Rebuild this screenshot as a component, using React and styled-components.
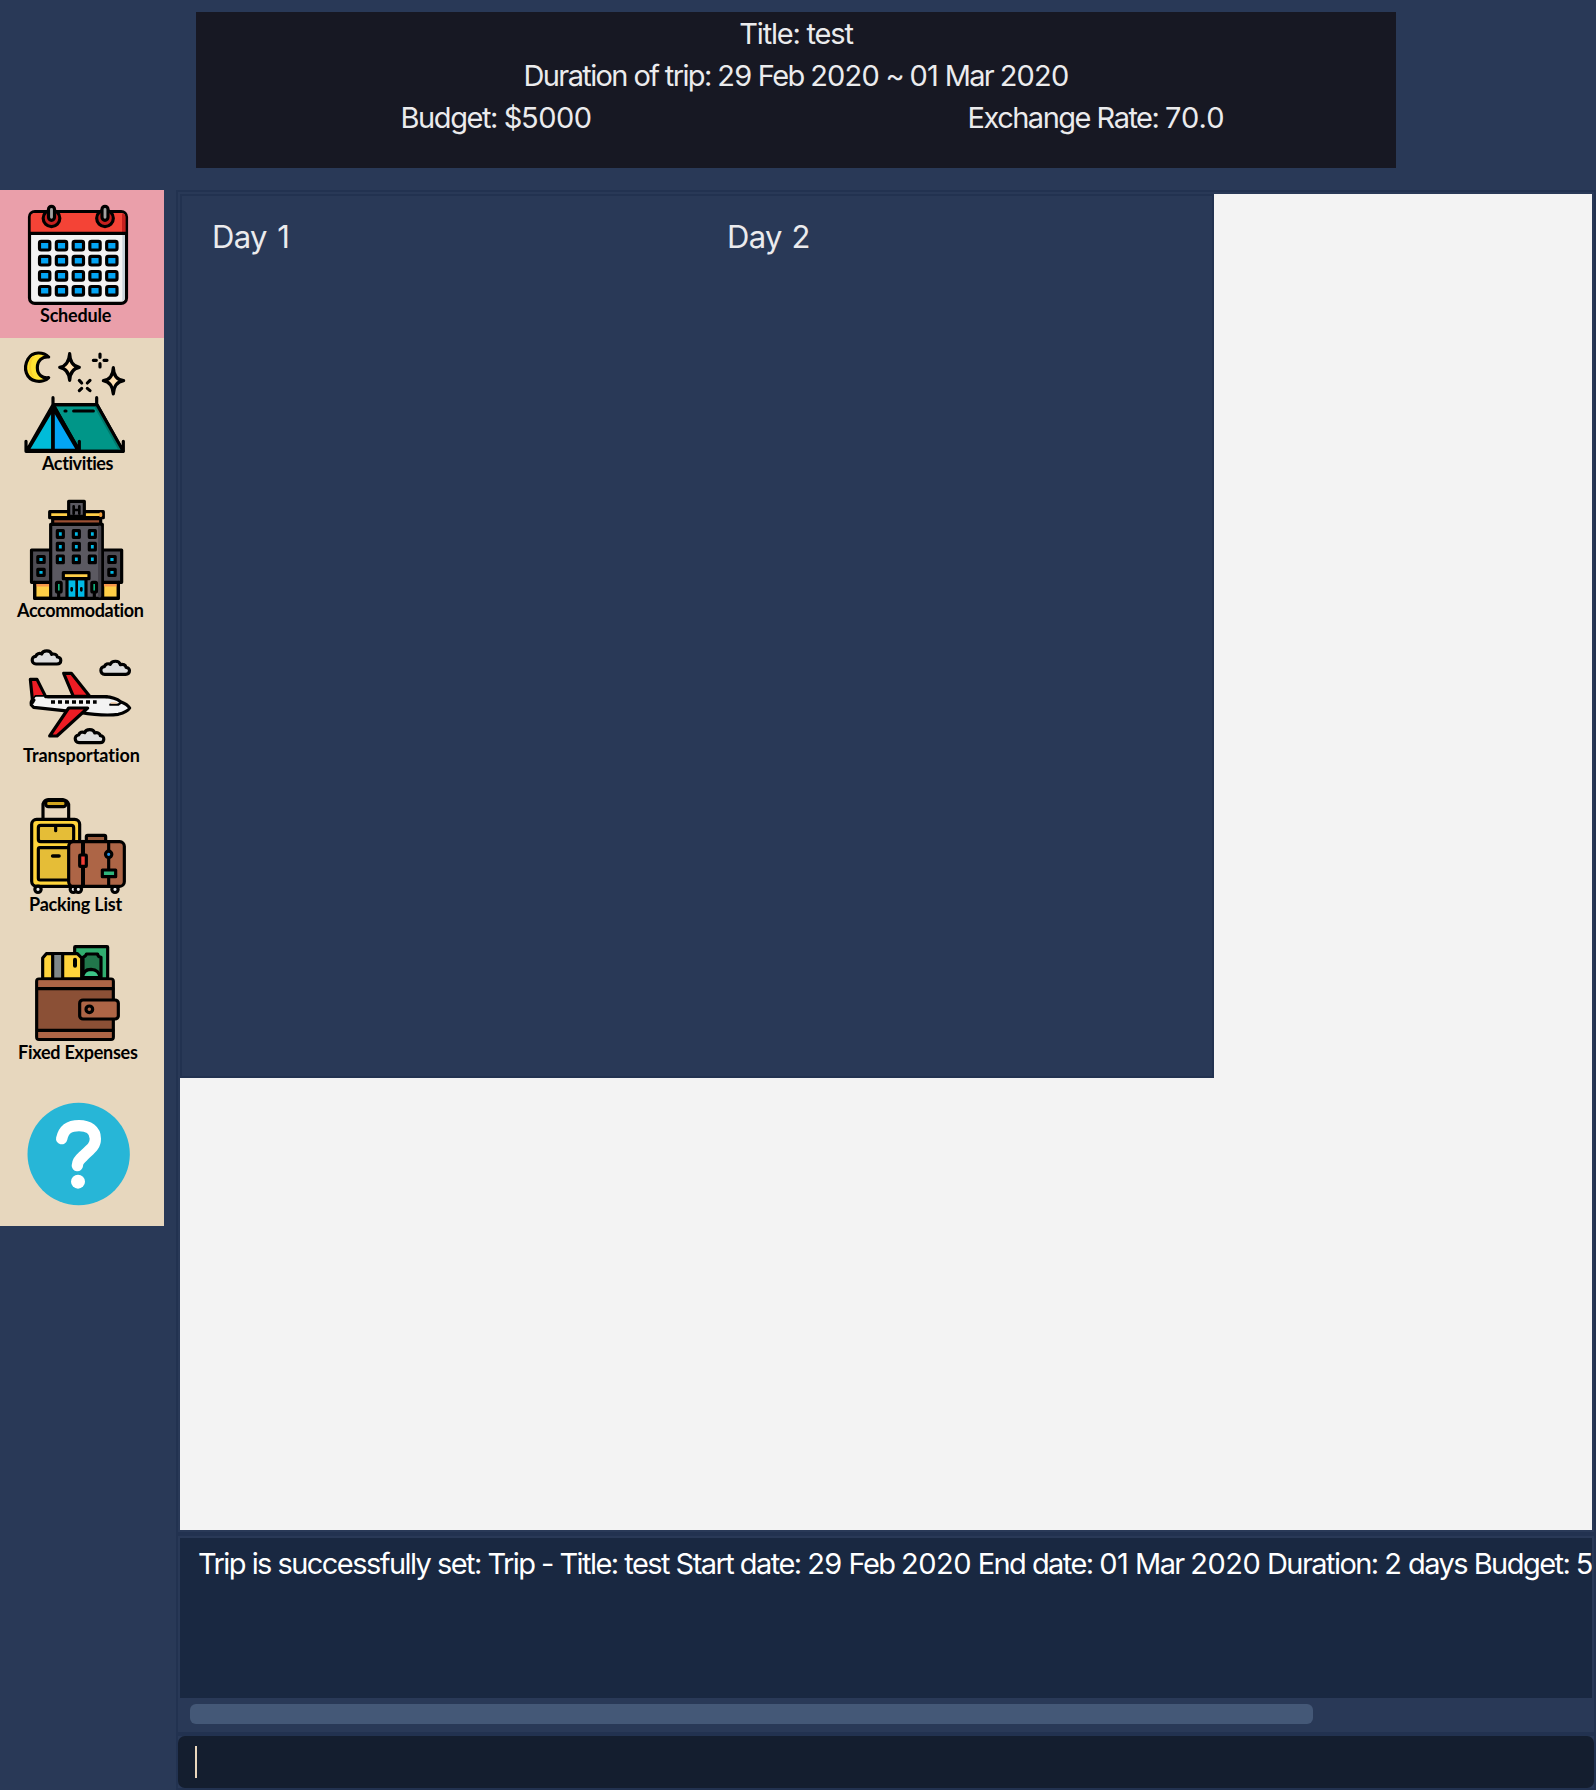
import React from "react";
import styled, { createGlobalStyle } from "styled-components";

const c = {
  base: "#293957",
  line: "#223250",
  header: "#171823",
  sand: "#e7d7be",
  pink: "#ea9faa",
  paper: "#f3f3f3",
  log: "#192841",
  thumb: "#445877",
  input: "#141e2f",
  text: "#ebebed",
};

const GlobalStyle = createGlobalStyle`
  *, *::before, *::after { box-sizing: border-box; }
  body { margin: 0; background: ${c.base}; }
`;

const Window = styled.div`
  width: 1596px;
  height: 1790px;
  display: flex;
  flex-direction: column;
  overflow: hidden;
  background: ${c.base};
  color: ${c.text};
  font-family: Inter, "Liberation Sans", sans-serif;
`;

const TripHeader = styled.header`
  width: 1200px;
  height: 156px;
  margin: 12px 0 22px 196px;
  padding-top: 1px;
  flex: none;
  background: ${c.header};
`;

const HeaderRow = styled.div`
  display: grid;
  grid-template-columns: repeat(${(p) => p.$columns}, 1fr);
`;

const HeaderText = styled.span`
  font-size: 29px;
  line-height: 42px;
  text-align: center;
  letter-spacing: ${(p) => p.$spacing}px;
  white-space: nowrap;
`;

const Digits = styled.span`
  letter-spacing: ${(p) => p.$spacing}px;
`;

const Body = styled.div`
  flex: 1;
  display: flex;
  align-items: flex-start;
  min-height: 0;
`;

const Sidebar = styled.nav`
  width: 164px;
  margin-right: 12px;
  flex: none;
  display: flex;
  flex-direction: column;
  background: ${c.sand};
`;

const Tab = styled.div`
  height: 148px;
  display: flex;
  flex-direction: column;
  background: ${(p) => (p.$active ? c.pink : c.sand)};
`;

const Glyph = styled.svg`
  display: block;
  flex: none;
  width: 164px;
  height: ${(p) => p.$height}px;
  fill: none;
  stroke: #000;
  stroke-width: 9.5;
  stroke-linejoin: round;
  stroke-linecap: round;
`;

const TabLabel = styled.span`
  padding-left: ${(p) => p.$indent}px;
  margin-top: ${(p) => p.$drop}px;
  color: #000;
  font: 700 18px/24px Lato, "Open Sans", sans-serif;
  letter-spacing: ${(p) => p.$spacing}px;
  white-space: nowrap;
`;

const Main = styled.main`
  flex: 1;
  min-width: 0;
  height: 1600px;
  display: flex;
  flex-direction: column;
  border: 2px solid ${c.line};
`;

const Pane = styled.section`
  height: 1340px;
  flex: none;
  padding: 2px;
`;

const Canvas = styled.div`
  height: 1336px;
  background: ${c.paper};
`;

const DayGrid = styled.div`
  width: 1034px;
  height: 884px;
  display: grid;
  grid-template-columns: 515px 1fr;
  padding: 21px 0 0 30px;
  border: 2px solid ${c.line};
  background: ${c.base};
`;

const DayTitle = styled.h2`
  margin: 0;
  font-size: 31px;
  font-weight: 400;
  line-height: 40px;
  letter-spacing: -0.7px;
  word-spacing: ${(p) => p.$gap}px;
`;

const LogPane = styled.section`
  height: 196px;
  flex: none;
  padding: 2px 2px 0;
  background: ${c.base};
`;

const LogOutput = styled.div`
  height: 160px;
  padding: 5px 0 0 18px;
  overflow: hidden;
  background: ${c.log};
  color: #fff;
  font-size: 29px;
  line-height: 42px;
  letter-spacing: -1.55px;
  white-space: nowrap;
`;

const ScrollTrack = styled.div`
  height: 34px;
  padding: 6px 10px;
`;

const ScrollThumb = styled.div`
  width: 1123px;
  height: 20px;
  border-radius: 6px;
  background: ${c.thumb};
`;

const Divider = styled.div`
  height: 4px;
  flex: none;
  background: ${c.line};
`;

const CommandBox = styled.div`
  height: 52px;
  flex: none;
  padding: 10px 17px;
  border-radius: 7px;
  background: ${c.input};
`;

const Caret = styled.div`
  width: 2px;
  height: 32px;
  background: #ead7bd;
`;

function Spaced({ text, digits }) {
  return text
    .split(/([\d.]+)/)
    .map((part, i) => (i % 2 ? <Digits key={i} $spacing={digits}>{part}</Digits> : part));
}

function CalendarIcon() {
  const xs = [134, 184.5, 235, 285, 335.5];
  const ys = [197, 242, 287.5, 332.5];
  return (
    <Glyph $height={115} viewBox="0 30 492 345">
      <rect x="88.500" y="95" width="291" height="275" rx="16" fill="#f3f3f3" />
      <path d="M367 164h8v186q0 10-8 14z" fill="#c9d3da" stroke="none" />
      <path d="M92 156v-45q0-12 13-12h258q13 0 13 12v45z" fill="#f44336" stroke="none" />
      <path d="M366 100q10 2 10 11v45h-10z" fill="#c6201f" stroke="none" />
      <path d="M90 160h288" />
      {[154.5, 315].map((x) => (
        <g key={x}>
          <circle cx={x} cy="115" r="25" fill="#c6201f" />
          <rect x={x - 9} y="79" width="18" height="42" rx="9" fill="#a3a3a3" />
        </g>
      ))}
      {ys.map((y) =>
        xs.map((x) => (
          <rect key={`${x}-${y}`} x={x - 15.5} y={y - 13} width="31" height="26" rx="5" fill="#03a5f5" />
        ))
      )}
    </Glyph>
  );
}

function TentIcon() {
  return (
    <Glyph $height={115} viewBox="0 9 492 345">
      <path d="M146 66C130 50 98 48 84 72C68 101 79 132 108 138C122 141 138 137 146 128C128 131 112 119 112 98C112 77 127 64 146 66Z" fill="#ffe232" />
      <path d="M98 67C87 80 88 112 99 126" stroke="#fbd02a" strokeWidth="6" />
      <path d="M209 56Q210 93 238 97Q211 101 209 136Q206 101 179 97Q206 93 209 56Z" fill="#ffe0b2" />
      <path d="M340 98Q341 134 371 137Q342 141 340 177Q337 141 310 137Q338 134 340 98Z" fill="#ffe0b2" />
      <path d="M300 57v10M300 86v10M280 76h9M312 76h9M238 136l7 8M270 136l-8 8M238 167l7-7M270 167l-8-7" />
      <path d="M160 209H291L369 349H238Z" fill="#009688" />
      <path d="M290 218L361 345" stroke="#00796b" strokeWidth="10" />
      <path d="M159 219L83 346H159Z" fill="#00bcd9" />
      <path d="M159 219L234 346H159Z" fill="#03a5f5" />
      <path d="M159 188V349M290 188V209M78 319V349H370V319M238 319V349M159 209L80 347M159 209L238 347M291 209L369 347M160 209H291" />
      <path d="M195 228h3M221 228h59" />
    </Glyph>
  );
}

function HotelIcon() {
  return (
    <Glyph $height={115} viewBox="0 18 492 345">
      <rect x="104" y="307" width="50" height="48" fill="#ffcf47" />
      <rect x="308" y="307" width="47" height="48" fill="#ffcf47" />
      <path d="M108 315h43M312 315h40" stroke="#f6974a" />
      <rect x="94.500" y="210" width="58" height="97" fill="#4d4b52" />
      <rect x="307" y="210" width="58" height="97" fill="#4d4b52" />
      <path d="M104 307v48h251v-48" />
      <rect x="152" y="133" width="155" height="222" fill="#5b5961" />
      <path d="M299 140v208" stroke="#454249" />
      <rect x="158" y="116" width="144" height="16" fill="#9b4f32" />
      <rect x="149" y="95" width="161" height="18" fill="#ffcf47" />
      <path d="M302 101.500v5" stroke="#f0a040" />
      <rect x="206" y="64" width="47" height="45" fill="#5b5961" />
      <path d="M221 79v22M238 79v22M221 90h17" strokeWidth="8" />
      {[162, 200, 238].map((y) =>
        [181, 229, 277].map((x) => (
          <rect key={`${x}-${y}`} x={x - 9} y={y - 10} width="18" height="20" fill="#00b9e6" />
        ))
      )}
      {[238.5, 277].map((y) =>
        [123, 336].map((x) => (
          <rect key={`${x}-${y}`} x={x - 9.500} y={y - 9} width="19" height="18" fill="#00b9e6" />
        ))
      )}
      <rect x="201" y="296" width="57" height="59" fill="#00b9e6" />
      <path d="M230 296v59M215 325v6M244 325v6" strokeWidth="8" />
      <path d="M176 338v17M283 338v17" />
      <rect x="169.500" y="307" width="14" height="29" rx="3" fill="#12c68a" />
      <rect x="275.500" y="307" width="14" height="29" rx="3" fill="#12c68a" />
      <rect x="190" y="278" width="77" height="18" fill="#ffcf47" />
    </Glyph>
  );
}

const Cloud = ({ x, y }) => (
  <path
    transform={`translate(${x} ${y})`}
    d="M15 45C0 45 0 22 14 22C17 14 25 11 32 15C36 3 59 2 62 16C70 13 78 17 79 24C93 24 93 45 78 45Z"
    fill="#dedede"
  />
);

function PlaneIcon() {
  return (
    <Glyph $height={113} viewBox="0 -3 492 339">
      <Cloud x={93} y={42} />
      <Cloud x={299} y={73} />
      <path d="M191 115H214L269 184H220Z" fill="#ed1c24" />
      <path d="M103 187Q91 198 94 210L101 217L240 232Q310 244 355 238Q382 231 389 219Q382 207 362 200Q345 187 315 185H107Z" fill="#f3f3f3" />
      <path d="M91 133H111L137 185H107L98 202Z" fill="#ed1c24" />
      <path d="M109 190H137" stroke="#f3f3f3" />
      <path d="M137 185H320" />
      <path d="M331 209h24l8-6" strokeWidth="7" />
      <path d="M334 204h15" stroke="#f2c9a0" strokeWidth="5" />
      <path d="M153 201h137" strokeWidth="11" strokeDasharray="12 9" strokeLinecap="butt" />
      <path d="M206 219H263L171 303H149Z" fill="#ed1c24" />
      <Cloud x={222} y={278} />
    </Glyph>
  );
}

function LuggageIcon() {
  return (
    <Glyph $height={114} viewBox="0 6 492 342">
      <path d="M129 117V72Q133 60 145 59H188Q202 61 206 73V117" />
      <rect x="137" y="61" width="61" height="19" rx="8" fill="#d1a51f" />
      <rect x="95" y="118" width="144" height="201" rx="15" fill="#ffd43b" />
      <rect x="115" y="136" width="106" height="49" rx="7" fill="#e5bd37" />
      <path d="M167 140v12" />
      <rect x="115" y="203" width="106" height="97" rx="5" fill="#e5bd37" />
      <path d="M158 228h19" strokeWidth="11" />
      <rect x="259" y="166" width="58" height="20" rx="4" fill="#9b5d3e" />
      {[114, 220, 235, 345].map((x) => (
        <circle key={x} cx={x} cy="328" r="9.500" fill="#eee" />
      ))}
      <rect x="206" y="185" width="167" height="134" rx="14" fill="#ad6546" />
      <path d="M249 185v134" strokeWidth="12" />
      <path d="M326 185v134" />
      <rect x="239" y="225" width="20" height="34" rx="2" fill="#ef3e36" />
      <circle cx="326" cy="223" r="9.500" fill="#2494e8" />
      <rect x="307" y="270" width="40" height="20" fill="#2fb57c" />
    </Glyph>
  );
}

function WalletIcon() {
  return (
    <Glyph $height={114} viewBox="0 0 492 342">
      <rect x="224" y="50" width="99" height="97" rx="2" fill="#31ae6f" />
      <path d="M249 147V82Q259 77 259 72H293Q293 80 303 82V147Z" fill="#21764b" />
      <path d="M248 143Q249 118 273 118Q298 119 300 143Z" fill="#3cc486" />
      <path d="M128 147V84L139 71H232L245 84V147Z" fill="#ffd43b" />
      <path d="M172 75v70" stroke="#7f8789" strokeWidth="24" strokeLinecap="butt" />
      <path d="M158 73v72M188 73v72" />
      <path d="M225 89v18" strokeWidth="12" />
      <rect x="110" y="147" width="230" height="181" rx="7" fill="#8b5036" />
      <path d="M115 151h220v22H115zM115 303h220v21H115z" fill="#ad6546" stroke="none" />
      <path d="M112 176h227M112 301h227" />
      <rect x="239" y="210" width="116" height="57" rx="10" fill="#ad6546" />
      <circle cx="268" cy="238" r="10" />
    </Glyph>
  );
}

function HelpIcon() {
  return (
    <Glyph $height={148} viewBox="0 -6 492 444">
      <circle cx="236" cy="222" r="153.500" fill="#27b6d7" stroke="none" />
      <path d="M185 176C192 145 210 137 237 137C266 137 286 151 286 176C286 200 270 208 250 228C235 242 233 246 232 257" stroke="#fff" strokeWidth="34" />
      <circle cx="234" cy="305" r="21" fill="#fff" stroke="none" />
    </Glyph>
  );
}

const tabs = [
  { label: "Schedule", Icon: CalendarIcon, indent: 40, drop: -2, spacing: -0.2, active: true },
  { label: "Activities", Icon: TentIcon, indent: 42, drop: -2, spacing: -0.4 },
  { label: "Accommodation", Icon: HotelIcon, indent: 17, drop: -3, spacing: -0.35 },
  { label: "Transportation", Icon: PlaneIcon, indent: 23, drop: -4, spacing: -0.05 },
  { label: "Packing List", Icon: LuggageIcon, indent: 29, drop: -4, spacing: -0.2 },
  { label: "Fixed Expenses", Icon: WalletIcon, indent: 18, drop: -4, spacing: -0.25 },
];

export default function App() {
  return (
    <>
      <GlobalStyle />
      <Window>
        <TripHeader>
          <HeaderRow $columns={1}>
            <HeaderText $spacing={-1.2}>Title: test</HeaderText>
            <HeaderText $spacing={-1.62}>
              <Spaced text="Duration of trip: 29 Feb 2020 ~ 01 Mar 2020" digits={-0.8} />
            </HeaderText>
          </HeaderRow>
          <HeaderRow $columns={2}>
            <HeaderText $spacing={-1.4}>
              <Spaced text="Budget: $5000" digits={-0.5} />
            </HeaderText>
            <HeaderText $spacing={-1.5}>
              <Spaced text="Exchange Rate: 70.0" digits={0} />
            </HeaderText>
          </HeaderRow>
        </TripHeader>
        <Body>
          <Sidebar>
            {tabs.map(({ label, Icon, indent, drop, spacing, active }) => (
              <Tab key={label} $active={active}>
                <Icon />
                <TabLabel $indent={indent} $drop={drop} $spacing={spacing}>
                  {label}
                </TabLabel>
              </Tab>
            ))}
            <Tab>
              <HelpIcon />
            </Tab>
          </Sidebar>
          <Main>
            <Pane>
              <Canvas>
                <DayGrid>
                  <DayTitle $gap={2.5}>Day 1</DayTitle>
                  <DayTitle $gap={1.8}>Day 2</DayTitle>
                </DayGrid>
              </Canvas>
            </Pane>
            <Divider />
            <LogPane>
              <LogOutput>
                <Spaced
                  text="Trip is successfully set: Trip - Title: test Start date: 29 Feb 2020 End date: 01 Mar 2020 Duration: 2 days Budget: 5"
                  digits={-0.5}
                />
              </LogOutput>
              <ScrollTrack>
                <ScrollThumb />
              </ScrollTrack>
            </LogPane>
            <Divider />
            <CommandBox>
              <Caret />
            </CommandBox>
          </Main>
        </Body>
      </Window>
    </>
  );
}
